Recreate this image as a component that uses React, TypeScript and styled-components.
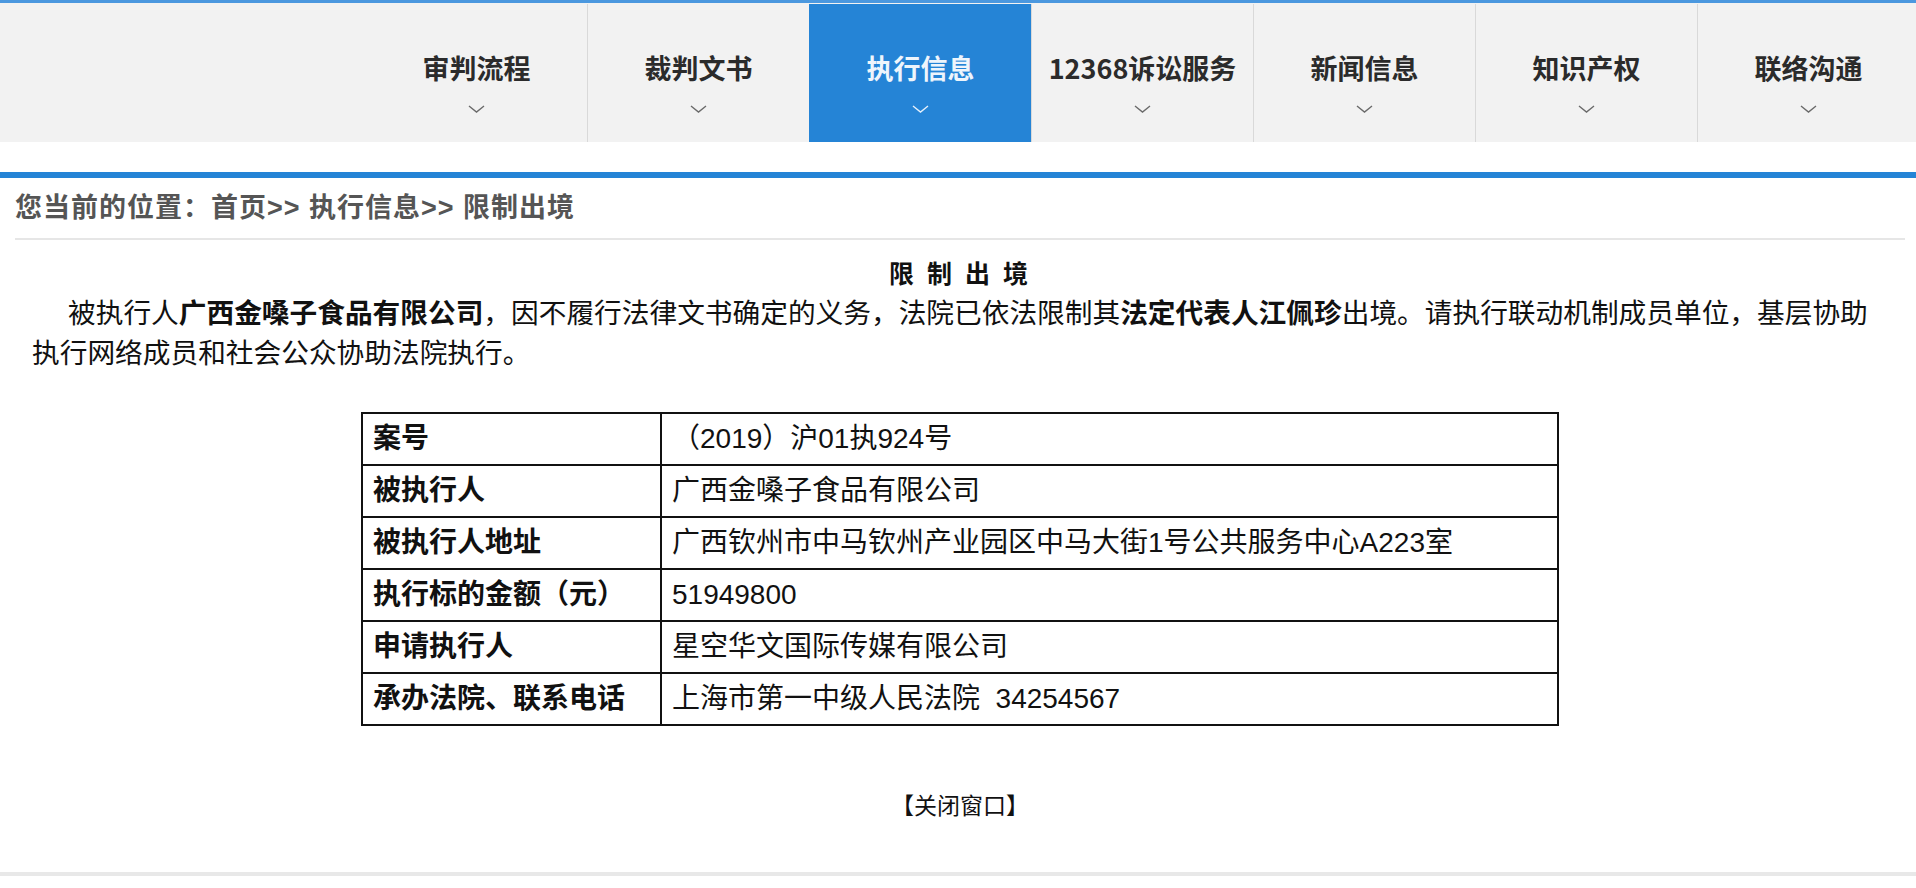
import React from 'react';
import styled, { createGlobalStyle } from 'styled-components';

const GlobalStyle = createGlobalStyle`
  html, body { margin: 0; padding: 0; background: #fff; }
  body {
    font-family: "Liberation Sans", "Noto Sans CJK SC", sans-serif;
    color: #111;
  }
  * { box-sizing: border-box; }
`;

const BLUE = '#2584d6';

const Header = styled.header`
  border-top: 3px solid #4b98df;
  background: #f2f2f2;
  overflow: hidden;
`;

const NavList = styled.ul`
  list-style: none;
  margin: 0 -3px 0 0;
  padding: 0;
  display: flex;
  justify-content: flex-end;
  height: 139px;
`;

const NavItem = styled.li<{ $active?: boolean; $first?: boolean }>`
  flex: 0 0 222px;
  display: flex;
  flex-direction: column;
  align-items: center;
  padding-top: 44px;
  margin-top: 1px;
  border-left: 1px solid
    ${(p) => (p.$active ? BLUE : p.$first ? 'transparent' : '#d9d9d9')};
  background: ${(p) => (p.$active ? BLUE : 'transparent')};
  color: ${(p) => (p.$active ? '#eef5fc' : '#2b2b2b')};
  font-family: "Noto Sans CJK SC", sans-serif;
  font-size: 27px;
  font-weight: 700;
  line-height: 40px;
  white-space: nowrap;
`;

const NavLabel = styled.span`
  display: block;
`;

const Chevron = styled.svg<{ $active?: boolean }>`
  margin-top: 17px;
  width: 17px;
  height: 8px;
  stroke: ${(p) => (p.$active ? '#e6f0fb' : '#6a6a6a')};
  fill: none;
  stroke-width: 1.4;
`;

const BlueBar = styled.div`
  margin-top: 30px;
  height: 6px;
  background: ${BLUE};
`;

const Content = styled.main`
  padding: 0 11px 0 15px;
`;

const Breadcrumb = styled.div`
  height: 62px;
  line-height: 60px;
  font-size: 27px;
  font-weight: 700;
  letter-spacing: 1px;
  color: #555;
  border-bottom: 2px solid #e6e6e6;
  white-space: nowrap;
`;

const Article = styled.article`
  padding: 14px 17px 0;
`;

const Title = styled.h1`
  margin: 0;
  text-align: center;
  font-size: 25px;
  font-weight: 700;
  line-height: 40px;
  letter-spacing: 3px;
  color: #111;
`;

const Para = styled.p`
  margin: 0;
  font-size: 27.7px;
  line-height: 40px;
  text-indent: 36px;
  color: #111;
`;

const Strong = styled.b`
  font-weight: 700;
`;

const InfoTable = styled.table`
  margin: 38px auto 0;
  width: 1198px;
  border-collapse: collapse;
  border: 2px solid #111;
`;

const Cell = styled.td<{ $label?: boolean }>`
  border: 2px solid #111;
  height: 52px;
  padding: 0 10px;
  font-size: 28px;
  line-height: 1;
  font-weight: ${(p) => (p.$label ? 700 : 400)};
  width: ${(p) => (p.$label ? '25%' : 'auto')};
  color: #111;
  white-space: nowrap;
`;

const CloseLink = styled.div`
  margin-top: 67px;
  text-align: center;
  font-size: 23px;
  line-height: 26px;
  color: #111;
`;

const Footer = styled.footer`
  margin-top: 53px;
  border-top: 4px solid #e8e8e8;
  height: 20px;
`;

const navItems = ['审判流程', '裁判文书', '执行信息', '12368诉讼服务', '新闻信息', '知识产权', '联络沟通'];

const rows: [string, string][] = [
  ['案号', '（2019）沪01执924号'],
  ['被执行人', '广西金嗓子食品有限公司'],
  ['被执行人地址', '广西钦州市中马钦州产业园区中马大街1号公共服务中心A223室'],
  ['执行标的金额（元）', '51949800'],
  ['申请执行人', '星空华文国际传媒有限公司'],
  ['承办法院、联系电话', '上海市第一中级人民法院\u00a0\u00a034254567'],
];

export default function App() {
  return (
    <>
      <GlobalStyle />
      <Header>
        <NavList>
          {navItems.map((label, i) => {
            const active = label === '执行信息';
            return (
              <NavItem key={label} $active={active} $first={i === 0}>
                <NavLabel>{label}</NavLabel>
                <Chevron $active={active} viewBox="0 0 17 8">
                  <polyline points="1,1 8.5,7 16,1" />
                </Chevron>
              </NavItem>
            );
          })}
        </NavList>
      </Header>
      <BlueBar />
      <Content>
        <Breadcrumb>您当前的位置：首页&gt;&gt; 执行信息&gt;&gt; 限制出境</Breadcrumb>
        <Article>
          <Title>限 制 出 境</Title>
          <Para>
            被执行人<Strong>广西金嗓子食品有限公司</Strong>，因不履行法律文书确定的义务，法院已依法限制其
            <Strong>法定代表人江佩珍</Strong>出境。请执行联动机制成员单位，基层协助执行网络成员和社会公众协助法院执行。
          </Para>
          <InfoTable>
            <tbody>
              {rows.map(([k, v]) => (
                <tr key={k}>
                  <Cell $label>{k}</Cell>
                  <Cell>{v}</Cell>
                </tr>
              ))}
            </tbody>
          </InfoTable>
          <CloseLink>【关闭窗口】</CloseLink>
        </Article>
      </Content>
      <Footer />
    </>
  );
}
